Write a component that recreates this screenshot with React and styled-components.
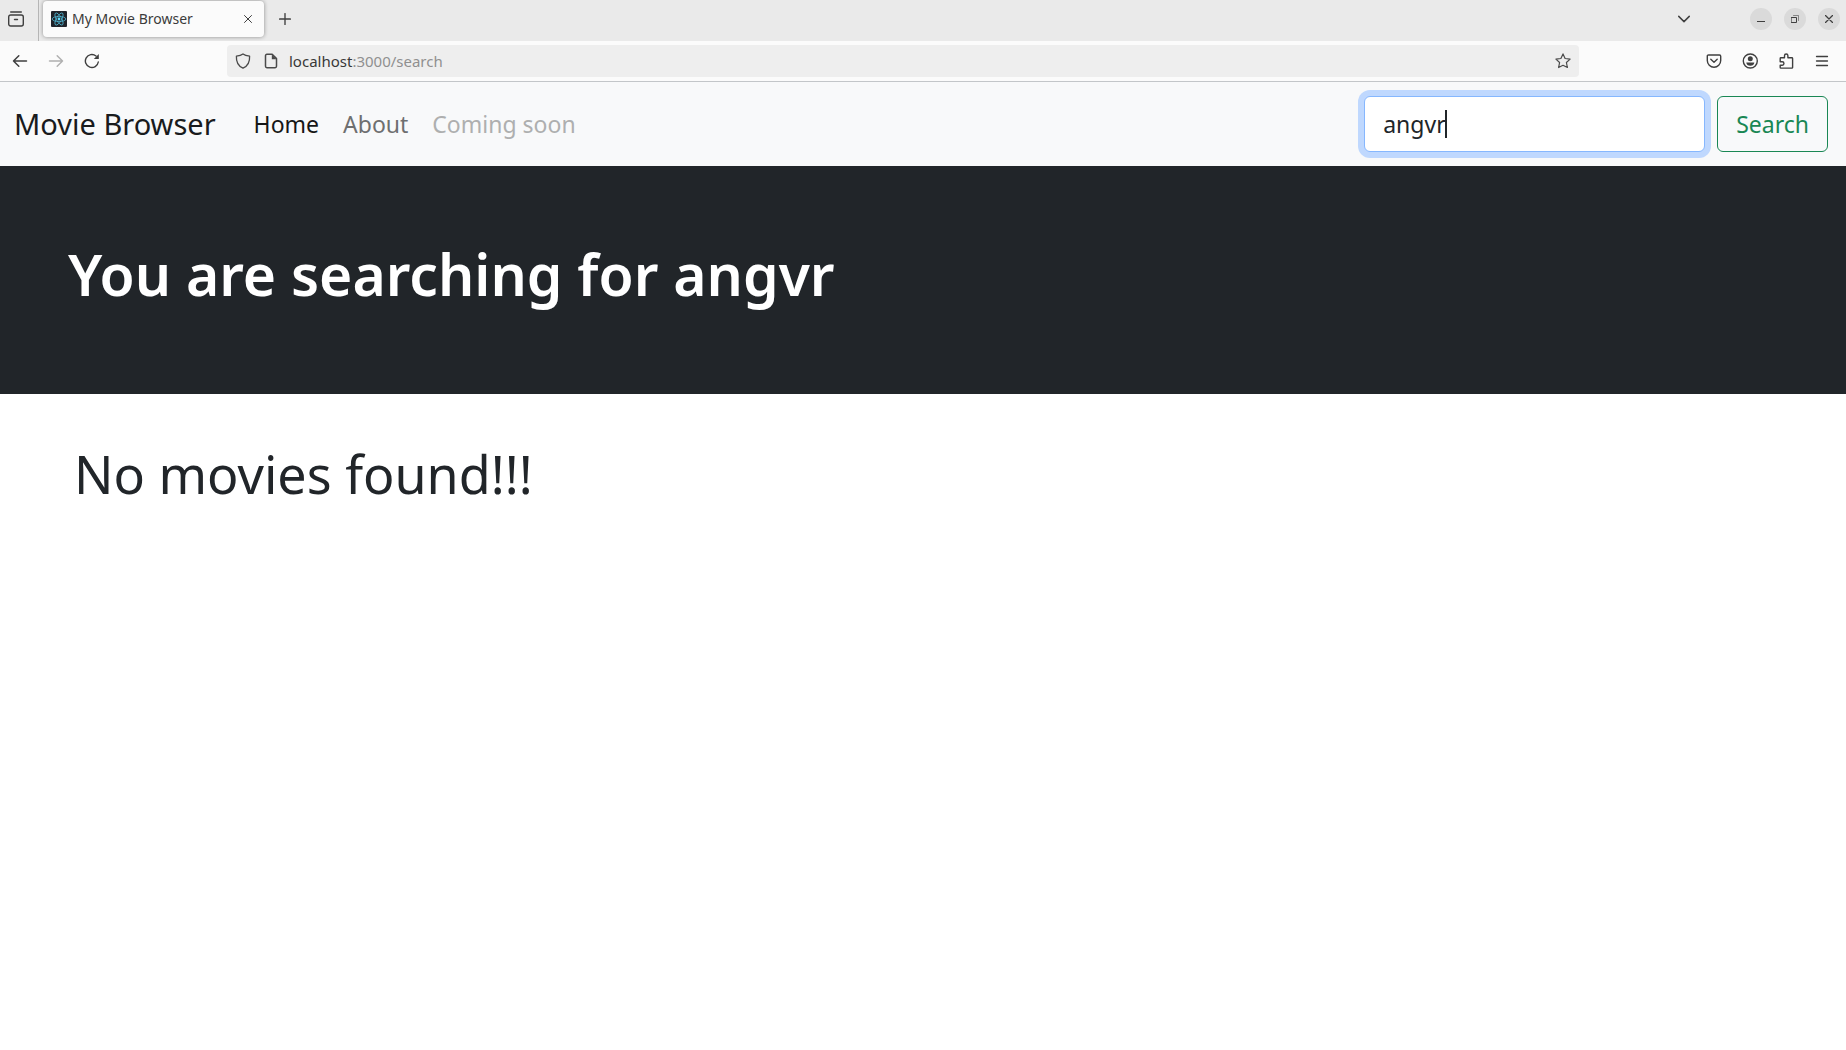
import React, { useState } from "react";
import styled, { createGlobalStyle } from "styled-components";

const GlobalStyle = createGlobalStyle`
  *, *::before, *::after { box-sizing: border-box; }
  body {
    margin: 0;
    background: #ffffff;
    color: #212529;
    font-family: "Noto Sans", sans-serif;
    font-size: 23px;
    line-height: 36px;
  }
  h1, h2, p, ul { margin: 0; padding: 0; }
  button, input { font: inherit; }
`;

const Window = styled.div`
  display: flex;
  flex-direction: column;
  min-height: 100vh;
`;

/* Browser chrome */

const TabStrip = styled.div`
  display: flex;
  align-items: center;
  height: 41px;
  padding: 0 6px 3px 0;
  background: #eaeaea;
  color: #3b3b3b;
`;

const IconButton = styled.button`
  display: inline-flex;
  align-items: center;
  justify-content: center;
  flex: none;
  width: ${(p) => p.$width || 36}px;
  height: ${(p) => p.$height || 32}px;
  padding: 0;
  border: 0;
  background: none;
  color: ${(p) => (p.disabled ? "#b0b0b0" : "#3f3f3f")};
`;

const FirefoxView = styled.div`
  display: flex;
  align-items: center;
  width: 39px;
  height: 41px;
  margin-bottom: -3px;
  padding-bottom: 3px;
  border-right: 1px solid #b6b6b6;
`;

const Tab = styled.div`
  display: flex;
  align-items: center;
  gap: 5px;
  width: 221px;
  height: 36px;
  margin: 0 4px;
  padding: 0 4px 0 8px;
  border-radius: 4px;
  background: #fbfbfb;
  box-shadow: 0 0 4px rgba(0, 0, 0, 0.4);
`;

const TabTitle = styled.span`
  flex: 1;
  font-size: 14px;
  line-height: 20px;
  white-space: nowrap;
`;

const Spacer = styled.div`
  flex: 1;
`;

const WindowControls = styled.div`
  display: flex;
  gap: 12px;
  margin-left: 48px;
`;

const WindowButton = styled(IconButton)`
  width: 22px;
  height: 22px;
  border-radius: 50%;
  background: #dadada;
`;

const Toolbar = styled.div`
  display: flex;
  align-items: center;
  height: 41px;
  padding: 0 6px 0 2px;
  border-bottom: 1px solid #c3c6c9;
  background: #fbfbfb;
`;

const AddressBar = styled.label`
  display: flex;
  align-items: center;
  flex: 1;
  height: 32px;
  margin: 0 117px 0 117px;
  padding: 0 2px;
  border-radius: 4px;
  background: #eeeeee;
`;

const AddressIcon = styled.span`
  display: inline-flex;
  align-items: center;
  justify-content: center;
  width: 28px;
  color: #4a4a4a;
`;

const Address = styled.span`
  flex: 1;
  padding-left: 4px;
  font-size: 15px;
  line-height: 20px;
  color: #909090;

  b {
    font-weight: 400;
    color: #383838;
  }
`;

/* Page */

const Navbar = styled.nav`
  display: flex;
  align-items: center;
  padding: 14px 18px 14px 14px;
  background: #f8f9fa;
`;

const Brand = styled.a`
  margin-right: 26px;
  color: #191b1d;
  font-size: 29px;
  line-height: 44px;
  text-decoration: none;
  white-space: nowrap;
`;

const NavList = styled.ul`
  display: flex;
  list-style: none;
`;

const NavLink = styled.a`
  display: block;
  padding: 8px 12px;
  color: ${(p) => (p.$active ? "#161616" : p.$disabled ? "#aeafaf" : "#6e6f70")};
  text-decoration: none;
  white-space: nowrap;
`;

const SearchForm = styled.form`
  display: flex;
  gap: 12px;
  margin-left: auto;
`;

const SearchField = styled.div`
  position: relative;
`;

const SearchInput = styled.input`
  display: block;
  width: 341px;
  height: 56px;
  padding: 8px 18px;
  border: 1px solid #86b7fe;
  border-radius: 6px;
  outline: 0;
  background: #ffffff;
  box-shadow: 0 0 0 6px #bfd8fe;
  color: #212529;
  caret-color: transparent;
`;

const Caret = styled.span`
  position: absolute;
  top: 14px;
  left: 81px;
  width: 2px;
  height: 28px;
  background: #212529;
`;

const SearchButton = styled.button`
  height: 56px;
  padding: 8px 18px;
  border: 1px solid #198754;
  border-radius: 6px;
  background: transparent;
  color: #198754;
`;

const Hero = styled.header`
  padding: 72px 68px 84px;
  background: #212529;
  color: #ffffff;
`;

const HeroTitle = styled.h1`
  font-size: 57px;
  font-weight: 600;
  line-height: 72px;
`;

const Results = styled.main`
  padding: 40px 74px;
`;

const EmptyMessage = styled.p`
  font-size: 52px;
  line-height: 80px;
`;

function Icon({ size = 16, children, stroke = 1.3 }) {
  return (
    <svg
      width={size}
      height={size}
      viewBox="0 0 16 16"
      fill="none"
      stroke="currentColor"
      strokeWidth={stroke}
      strokeLinecap="round"
      strokeLinejoin="round"
      aria-hidden="true"
    >
      {children}
    </svg>
  );
}

function ReactFavicon() {
  return (
    <svg width="16" height="16" viewBox="0 0 16 16" aria-hidden="true">
      <rect width="16" height="16" rx="1" fill="#20232a" />
      <g fill="none" stroke="#4fb3cf" strokeWidth="0.8">
        <ellipse cx="8" cy="8" rx="6.8" ry="2.6" />
        <ellipse cx="8" cy="8" rx="6.8" ry="2.6" transform="rotate(60 8 8)" />
        <ellipse cx="8" cy="8" rx="6.8" ry="2.6" transform="rotate(120 8 8)" />
      </g>
      <circle cx="8" cy="8" r="1.4" fill="#61dafb" />
    </svg>
  );
}

function BrowserChrome() {
  return (
    <>
      <TabStrip>
        <FirefoxView>
          <IconButton $width={32} aria-label="View recent browsing">
            <Icon stroke={1.4}>
              <path d="M2.700 1h10.600" />
              <path d="M.7 6a2 2 0 0 1 2-2h10.600a2 2 0 0 1 2 2v7a2 2 0 0 1-2 2H2.700a2 2 0 0 1-2-2zM6.500 8.500h3" />
            </Icon>
          </IconButton>
        </FirefoxView>
        <Tab>
          <ReactFavicon />
          <TabTitle>My Movie Browser</TabTitle>
          <IconButton $width={24} $height={24} aria-label="Close tab">
            <Icon size={8} stroke={2}>
              <path d="M1 1l14 14M15 1L1 15" />
            </Icon>
          </IconButton>
        </Tab>
        <IconButton $width={34} aria-label="New tab">
          <Icon size={12} stroke={1.8}>
            <path d="M8 .800v14.400M.800 8h14.400" />
          </Icon>
        </IconButton>
        <Spacer />
        <IconButton aria-label="List all tabs">
          <Icon size={12} stroke={1.9}>
            <path d="M1 4.500l7 7 7-7" />
          </Icon>
        </IconButton>
        <WindowControls>
          <WindowButton aria-label="Minimize">
            <Icon size={8} stroke={2}>
              <path d="M0 13h16" strokeLinecap="butt" />
            </Icon>
          </WindowButton>
          <WindowButton aria-label="Restore">
            <Icon size={8} stroke={2}>
              <path d="M1 5h10v10H1z" strokeLinejoin="miter" />
              <path d="M5 1h10v10" strokeLinejoin="miter" opacity=".55" />
            </Icon>
          </WindowButton>
          <WindowButton aria-label="Close">
            <Icon size={8} stroke={2.6}>
              <path d="M1 1l14 14M15 1L1 15" />
            </Icon>
          </WindowButton>
        </WindowControls>
      </TabStrip>
      <Toolbar>
        <IconButton aria-label="Back">
          <Icon stroke={1.5}>
            <path d="M14.500 8H1.500M6.800 2.700L1.500 8l5.300 5.300" />
          </Icon>
        </IconButton>
        <IconButton disabled aria-label="Forward">
          <Icon stroke={1.5}>
            <path d="M1.500 8h13M9.200 2.700L14.500 8l-5.300 5.300" />
          </Icon>
        </IconButton>
        <IconButton aria-label="Reload">
          <Icon stroke={1.4}>
            <path d="M14.300 9a6.500 6.500 0 1 1-2.300-6" />
            <path d="M14.800 1v5h-5z" fill="currentColor" stroke="none" />
          </Icon>
        </IconButton>
        <AddressBar>
          <AddressIcon>
            <Icon>
              <path d="M8 .9c2 1.600 4.200 2 6.600 2.300.3 5.300-1.600 9.700-6.600 12C3 12.900 1.100 8.500 1.400 3.200 3.800 2.900 6 2.500 8 .9z" />
            </Icon>
          </AddressIcon>
          <AddressIcon>
            <Icon stroke={1.5}>
              <path d="M2.500 2.700c0-.9.500-1.400 1.400-1.400h5.300l4.300 4.300v7.700c0 .9-.5 1.400-1.400 1.400H3.900c-.9 0-1.400-.5-1.400-1.400z" />
              <path d="M8.800 1.300v4.900h4.700z" fill="currentColor" stroke="none" />
            </Icon>
          </AddressIcon>
          <Address>
            <b>localhost</b>:3000/search
          </Address>
          <AddressIcon>
            <Icon stroke={1.2}>
              <path d="M8 .9l2.100 4.600 5 .6-3.700 3.400 1 5L8 12.300l-4.400 2.200 1-5L.9 6.100l5-.6z" />
            </Icon>
          </AddressIcon>
        </AddressBar>
        <IconButton aria-label="Save to Pocket">
          <Icon stroke={1.4}>
            <path d="M2.500 2h11c.7 0 1.200.5 1.200 1.200V7.500a6.700 6.700 0 0 1-13.400 0V3.200C1.300 2.500 1.800 2 2.500 2z" />
            <path d="M4.800 6.300L8 9.300l3.200-3" />
          </Icon>
        </IconButton>
        <IconButton aria-label="Account">
          <Icon stroke={1.4}>
            <circle cx="8.300" cy="8" r="7" />
            <circle cx="8.300" cy="5.700" r="2.500" fill="currentColor" stroke="none" />
            <path d="M4.300 9.500h8c0 2-1.700 3.300-4 3.300s-4-1.300-4-3.300z" fill="currentColor" stroke="none" />
          </Icon>
        </IconButton>
        <IconButton aria-label="Extensions">
          <Icon stroke={1.4}>
            <path d="M2.200 5.500c0-.4.3-.7.700-.7h3.600V2.700a1.700 1.700 0 0 1 3.400 0v2.100h3.900c.5 0 .8.300.8.700v8.900c0 .4-.3.700-.8.700H2.900c-.4 0-.7-.3-.7-.7v-2.200h2a1.700 1.700 0 0 0 0-3.500h-2z" />
          </Icon>
        </IconButton>
        <IconButton aria-label="Open menu">
          <Icon>
            <path d="M2.500 3.500h11M2.500 8h11M2.500 12.500h11" />
          </Icon>
        </IconButton>
      </Toolbar>
    </>
  );
}

export default function App() {
  const [query, setQuery] = useState("angvr");

  return (
    <Window>
      <GlobalStyle />
      <BrowserChrome />
      <Navbar>
        <Brand href="#">Movie Browser</Brand>
        <NavList>
          <li><NavLink href="#" $active>Home</NavLink></li>
          <li><NavLink href="#about">About</NavLink></li>
          <li><NavLink $disabled aria-disabled="true">Coming soon</NavLink></li>
        </NavList>
        <SearchForm onSubmit={(e) => e.preventDefault()}>
          <SearchField>
            <SearchInput
              type="search"
              aria-label="Search"
              value={query}
              onChange={(e) => setQuery(e.target.value)}
            />
            <Caret />
          </SearchField>
          <SearchButton type="submit">Search</SearchButton>
        </SearchForm>
      </Navbar>
      <Hero>
        <HeroTitle>You are searching for {query}</HeroTitle>
      </Hero>
      <Results>
        <EmptyMessage>No movies found!!!</EmptyMessage>
      </Results>
    </Window>
  );
}
